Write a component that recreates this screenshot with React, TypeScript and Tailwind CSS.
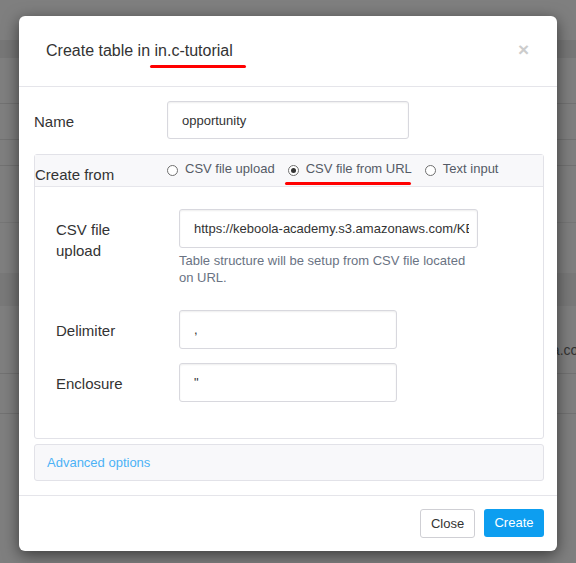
import React from 'react';

// background page rows, faded behind the overlay
const bgRows = [
  { h: 40, cls: '' },
  { h: 18, cls: 'bg-[#777777]' },
  { h: 46, cls: 'border-b border-[#727272]' },
  { h: 36, cls: 'border-b border-[#727272]' },
  { h: 26, cls: 'border-b border-[#727272]' },
  { h: 57, cls: 'border-b border-[#767676]' },
  { h: 50, cls: '' },
  { h: 33, cls: 'bg-[#797979]' },
  { h: 68, cls: 'border-b border-[#727272]' },
  { h: 40, cls: 'border-b border-[#727272]' },
];

function Radio({ label, checked }: { label: string; checked?: boolean }) {
  return (
    <label className="relative flex items-center gap-[7px] text-[13px] leading-[15px] text-[#555b66]">
      <span className="mt-[3px] flex h-[11px] w-[11px] items-center justify-center rounded-full border border-[#6f6f6f] bg-white">
        {checked && <span className="h-[5px] w-[5px] rounded-full bg-[#333]" />}
      </span>
      <span>{label}</span>
      {checked && <span className="absolute left-[-3px] right-[1px] top-[21px] h-[3px] rounded-full bg-[#ff0000]" />}
    </label>
  );
}

const inputCls =
  'h-[39px] rounded-[3px] border border-[#d8d8de] bg-white pl-[14px] pr-[8px] text-[13px] text-[#333] shadow-[inset_0_1px_2px_rgba(0,0,0,0.07)] outline-none';

export default function App() {
  return (
    <div className="relative h-[563px] w-[576px] overflow-hidden bg-[#7f7f7f] font-['Liberation_Sans',Arial,sans-serif]">
      {/* page behind the modal */}
      <div className="flex flex-col">
        {bgRows.map((r, i) => (
          <div key={i} style={{ height: r.h }} className={r.cls}>
            {i === 8 && (
              <div className="mr-[-14px] flex justify-end pt-[34px] text-[14px] text-[#333]">ta.com</div>
            )}
          </div>
        ))}
      </div>

      {/* modal */}
      <div className="absolute left-[19px] top-[16px] h-[535px] w-[538px] rounded-[6px] bg-white shadow-[0_4px_16px_rgba(0,0,0,0.55)]">
        <div className="flex h-[71px] items-center justify-between border-b border-[#e5e5ea] pl-[27px] pr-[28px]">
          <h1 className="text-[16px] leading-[18px] text-[#333]">
            Create table in{' '}
            <span className="relative">
              in.c-tutorial
              <span className="absolute left-[-5px] right-[-13px] top-[23px] h-[3px] rounded-full bg-[#ff0000]" />
            </span>
          </h1>
          <span className="mb-[3px] text-[19px] font-bold leading-none text-[#cccccc]">×</span>
        </div>

        <div className="pb-[14px] pl-[15px] pr-[13px] pt-[14px]">
          <div className="flex items-center">
            <div className="mt-[4px] w-[133px] text-[15px] text-[#333]">Name</div>
            <input readOnly value="opportunity" className={inputCls + ' !h-[38px] w-[242px]'} />
          </div>

          {/* create from panel */}
          <div className="mt-[15px] rounded-[3px] border border-[#e2e2e8]">
            <div className="flex h-[32px] items-start border-b border-[#e6e6eb] bg-[#f8f8fa]">
              <div className="w-[132px] pt-[11px] text-[15px] leading-[17px] text-[#333]">Create from</div>
              <div className="flex gap-[13px] pt-[6px]">
                <Radio label="CSV file upload" />
                <Radio label="CSV file from URL" checked />
                <Radio label="Text input" />
              </div>
            </div>

            <div className="pb-[36px] pl-[21px] pt-[22px]">
              <div className="flex items-start">
                <div className="w-[123px] pt-[10px] text-[15px] leading-[21px] text-[#333]">
                  CSV file
                  <br />
                  upload
                </div>
                <div>
                  <input
                    readOnly
                    value="https://keboola-academy.s3.amazonaws.com/KBC_Tutorial/opportunity.csv"
                    className={inputCls + ' w-[299px]'}
                  />
                  <p className="mt-[4px] w-[292px] text-[13px] leading-[17px] text-[#6a7383]">
                    Table structure will be setup from CSV file located on URL.
                  </p>
                </div>
              </div>

              <div className="mt-[24px] flex items-center">
                <div className="mt-[3px] w-[123px] text-[15px] text-[#333]">Delimiter</div>
                <input readOnly value="," className={inputCls + ' w-[218px]'} />
              </div>

              <div className="mt-[14px] flex items-center">
                <div className="mt-[3px] w-[123px] text-[15px] text-[#333]">Enclosure</div>
                <input readOnly value={'"'} className={inputCls + ' w-[218px]'} />
              </div>
            </div>
          </div>

          <div className="mt-[5px] flex h-[37px] items-center rounded-[3px] border border-[#e2e2e8] bg-[#f8f8fa] px-[12px] text-[13px] text-[#4cb2f6]">
            Advanced options
          </div>
        </div>

        <div className="flex justify-end gap-[9px] border-t border-[#e5e5ea] pr-[13px] pt-[13px]">
          <button className="h-[29px] w-[55px] rounded-[3px] border border-[#cfcfd4] bg-white text-[13px] text-[#333]">
            Close
          </button>
          <button className="h-[28px] w-[60px] rounded-[3px] bg-[#0d9ef0] text-[13px] text-white">Create</button>
        </div>
      </div>
    </div>
  );
}
